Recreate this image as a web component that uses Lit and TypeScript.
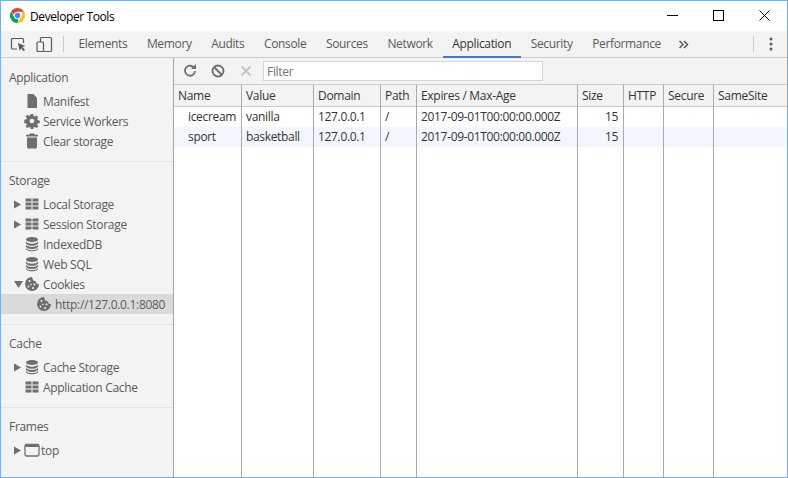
import { LitElement, html, css, svg } from 'lit';
import { customElement } from 'lit/decorators.js';

const cookie = svg`<path d="M8 1a7 7 0 1 0 7 7 2.800 2.800 0 0 1-3-2.800A3 3 0 0 1 8.600 2.500 1.800 1.800 0 0 1 8 1z"/><g fill="#f3f3f3"><circle cx="5.500" cy="5" r="1"/><circle cx="10.500" cy="8.500" r="1"/><circle cx="7" cy="8.500" r=".8"/><circle cx="4.500" cy="10.500" r=".9"/><circle cx="9" cy="12" r="1"/></g>`;

const icons: Record<string, unknown> = {
  manifest: svg`<path d="M3.500 1h6l3.500 4v10H3.500z"/>`,
  gear: svg`<path d="M6.800 1h2.400l.4 2 1.300.6 1.700-1.100 1.700 1.700-1.100 1.700.6 1.300 2 .4v2.400l-2 .4-.6 1.300 1.100 1.700-1.700 1.700-1.700-1.100-1.300.6-.4 2H6.800l-.4-2-1.300-.6-1.700 1.100-1.700-1.700 1.100-1.700-.6-1.300-2-.4V6.800l2-.4.6-1.300-1.100-1.700 1.700-1.700 1.700 1.100 1.300-.6z"/><circle cx="8" cy="8" r="2.300" fill="#f3f3f3"/>`,
  trash: svg`<path d="M6 .5h4l1 1.200h3v1.800H2V1.700h3zM3 4.500h10V14.500l-1 1H4l-1-1z"/>`,
  grid: svg`<path d="M1.500 2.500h6v3h-6zM8.500 2.500h6v3h-6zM1.500 6.500h6v3h-6zM8.500 6.500h6v3h-6zM1.500 10.500h6v3h-6zM8.500 10.500h6v3h-6z"/>`,
  db: svg`<ellipse cx="8" cy="3.500" rx="6" ry="2.500"/><path d="M2 5.500c1 1.700 3.500 2.200 6 2.200s5-.5 6-2.200v2c-1 1.700-3.500 2.300-6 2.300s-5-.6-6-2.300zM2 8.800c1 1.700 3.500 2.200 6 2.200s5-.5 6-2.200v2c-1 1.700-3.500 2.300-6 2.300s-5-.6-6-2.300zM2 12c1 1.700 3.500 2.200 6 2.200s5-.5 6-2.200v1.300c-1 1.500-3.500 2-6 2s-5-.5-6-2z"/>`,
  cookie,
  frame: svg`<rect x="1" y="2.500" width="14" height="11.500" rx="1.500" fill="none" stroke="currentColor" stroke-width="1.300"/><rect x="1" y="2.500" width="14" height="2.500"/>`,
};

interface Item { label: string; icon: string; arrow?: 'right' | 'down'; selected?: boolean; child?: boolean }
interface Section { title: string; items: Item[] }

const sections: Section[] = [
  { title: 'Application', items: [
    { label: 'Manifest', icon: 'manifest' },
    { label: 'Service Workers', icon: 'gear' },
    { label: 'Clear storage', icon: 'trash' },
  ] },
  { title: 'Storage', items: [
    { label: 'Local Storage', icon: 'grid', arrow: 'right' },
    { label: 'Session Storage', icon: 'grid', arrow: 'right' },
    { label: 'IndexedDB', icon: 'db' },
    { label: 'Web SQL', icon: 'db' },
    { label: 'Cookies', icon: 'cookie', arrow: 'down' },
    { label: 'http://127.0.0.1:8080', icon: 'cookie', selected: true, child: true },
  ] },
  { title: 'Cache', items: [
    { label: 'Cache Storage', icon: 'db', arrow: 'right' },
    { label: 'Application Cache', icon: 'grid' },
  ] },
  { title: 'Frames', items: [{ label: 'top', icon: 'frame', arrow: 'right' }] },
];

const tabs = ['Elements', 'Memory', 'Audits', 'Console', 'Sources', 'Network', 'Application', 'Security', 'Performance'];

const columns = [
  { title: 'Name', width: 68, cells: ['icecream', 'sport'], cls: 'indent' },
  { title: 'Value', width: 72, cells: ['vanilla', 'basketball'] },
  { title: 'Domain', width: 67, cells: ['127.0.0.1', '127.0.0.1'] },
  { title: 'Path', width: 36, cells: ['/', '/'] },
  { title: 'Expires / Max-Age', width: 161, cells: ['2017-09-01T00:00:00.000Z', '2017-09-01T00:00:00.000Z'] },
  { title: 'Size', width: 46, cells: ['15', '15'], cls: 'num' },
  { title: 'HTTP', width: 40, cells: ['', ''] },
  { title: 'Secure', width: 50, cells: ['', ''] },
  { title: 'SameSite', width: 73, cells: ['', ''] },
];

@customElement('app-root')
export class AppRoot extends LitElement {
  static styles = css`
    :host {
      display: block;
      width: 788px;
      height: 478px;
      font-family: 'Open Sans', 'Noto Sans', sans-serif;
      font-size: 12px;
      color: #333;
    }
    .window {
      box-sizing: border-box;
      width: 788px;
      height: 478px;
      border: 1px solid #6db3f2;
      display: flex;
      flex-direction: column;
      background: #fff;
      overflow: hidden;
    }
    .titlebar {
      height: 30px;
      flex: none;
      display: flex;
      align-items: center;
      padding-left: 9px;
      color: #000;
    }
    .logo { margin-top: -1px; }
    .titlebar .title { margin-left: 5px; letter-spacing: -0.4px; }
    .winbtns { margin-left: auto; display: flex; align-self: flex-start; }
    .winbtn { width: 46px; height: 28px; display: flex; align-items: center; justify-content: center; }
    .toolbar {
      height: 27px;
      box-sizing: border-box;
      flex: none;
      background: #f3f3f3;
      border-bottom: 1px solid #ccc;
      display: flex;
      align-items: center;
      padding-left: 9px;
      color: #5a5a5a;
    }
    .toolbar svg { flex: none; }
    .tool { width: 17px; height: 17px; margin-right: 9px; }
    .sep { width: 1px; height: 16px; background: #ccc; flex: none; margin-left: 1px; }
    .tabs { display: flex; height: 27px; margin-left: 4.7px; align-self: flex-start; }
    .tab {
      padding: 0 9.8px;
      line-height: 26px;
      box-sizing: border-box;
      letter-spacing: -0.35px;
      white-space: nowrap;
    }
    .tab.active { border-bottom: 2px solid #3879d9; color: #333; }
    .more { margin-left: 8px; }
    .main { flex: 1; display: flex; min-height: 0; }
    .sidebar {
      width: 172px;
      flex: none;
      background: #f3f3f3;
      border-right: 1px solid #a3a3a3;
      color: #5a5a5a;
    }
    .section { border-bottom: 1px solid #e4e4e4; padding: 9px 0 10px; }
    .section:first-child { padding-top: 10px; }
    .section:last-child { border-bottom: none; }
    .section h3 {
      margin: 0 0 3px;
      font: inherit;
      height: 20px;
      line-height: 20px;
      padding-left: 8px;
      letter-spacing: -0.3px;
    }
    .row { display: flex; align-items: center; height: 20px; white-space: nowrap; letter-spacing: -0.3px; }
    .row.selected { background: #dadada; }
    .arrow { width: 12px; margin-left: 13px; flex: none; display: flex; }
    .row.child .arrow { margin-left: 25px; }
    .row .ic { width: 16px; height: 16px; fill: #6e6e6e; color: #6e6e6e; flex: none; margin: 0 3px 0 -2px; }
    .row.frame .ic { margin-right: 1px; }
    .content { flex: 1; display: flex; flex-direction: column; min-width: 0; }
    .subbar {
      height: 27px;
      box-sizing: border-box;
      flex: none;
      background: #f3f3f3;
      border-bottom: 1px solid #ccc;
      display: flex;
      align-items: center;
      padding-left: 9px;
    }
    .subbar .btn { width: 14px; height: 14px; margin-right: 14px; flex: none; }
    .filter {
      box-sizing: border-box;
      width: 280px;
      height: 20px;
      margin-left: -4px;
      background: #fff;
      border: 1px solid #d6d6d6;
      padding-left: 3px;
      line-height: 19px;
      color: #757575;
      letter-spacing: -0.3px;
    }
    .table { flex: 1; display: flex; min-height: 0; }
    .col { box-sizing: border-box; border-right: 1px solid #aaa; flex: none; }
    .col:last-child { border-right: none; }
    .head {
      height: 22px;
      box-sizing: border-box;
      background: #f3f3f3;
      border-bottom: 1px solid #ccc;
      padding-left: 4px;
      line-height: 21px;
      white-space: nowrap;
      letter-spacing: -0.3px;
    }
    .cell { height: 20px; line-height: 20px; padding: 0 4px; white-space: nowrap; letter-spacing: -0.33px; }
    .cell.even { background: #f2f7fd; }
    .indent .cell { padding-left: 14px; }
    .num .cell { text-align: right; padding-right: 5px; }
  `;

  private section(s: Section) {
    return html`<div class="section">
      <h3>${s.title}</h3>
      ${s.items.map((it) => html`
        <div class="row ${it.selected ? 'selected' : ''} ${it.child ? 'child' : ''} ${it.icon === 'frame' ? 'frame' : ''}">
          <span class="arrow">
            ${it.arrow === 'right' ? html`<svg width="7" height="9"><path d="M0 .5l7 4-7 4z" fill="#6e6e6e"/></svg>` : ''}
            ${it.arrow === 'down' ? html`<svg width="9" height="7"><path d="M0 0h9L4.500 7z" fill="#6e6e6e"/></svg>` : ''}
          </span>
          <svg class="ic" viewBox="0 0 16 16">${icons[it.icon]}</svg>
          <span>${it.label}</span>
        </div>`)}
    </div>`;
  }

  render() {
    return html`<div class="window">
      <div class="titlebar">
        <svg class="logo" width="15" height="15" viewBox="0 0 16 16">
          <path d="M8 0a8 8 0 0 1 6.930 4H8a4 4 0 0 0-3.900 3.100L1.400 3.500A8 8 0 0 1 8 0z" fill="#db4437"/>
          <path d="M14.930 4A8 8 0 0 1 8 16l3.460-6a4 4 0 0 0 0-6z" fill="#fbc02d"/>
          <path d="M8 16A8 8 0 0 1 1.400 3.500L4.540 10a4 4 0 0 0 4.500 1.900z" fill="#0f9d58"/>
          <circle cx="8" cy="8" r="3.400" fill="#4285f4" stroke="#fff" stroke-width=".8"/>
        </svg>
        <span class="title">Developer Tools</span>
        <div class="winbtns">
          <div class="winbtn"><svg width="11" height="11"><path d="M0 5.500h11" stroke="#000"/></svg></div>
          <div class="winbtn"><svg width="11" height="11"><rect x=".5" y=".5" width="10" height="10" fill="none" stroke="#000"/></svg></div>
          <div class="winbtn"><svg width="11" height="11"><path d="M.5.500l10 10M10.500.500l-10 10" stroke="#000"/></svg></div>
        </div>
      </div>
      <div class="toolbar">
        <svg class="tool" viewBox="0 0 17 17" fill="none" stroke="#5a5a5a" stroke-width="1.200">
          <path d="M7 13H2.500a1 1 0 0 1-1-1V3.500a1 1 0 0 1 1-1h10a1 1 0 0 1 1 1V7"/>
          <path d="M8 7l7.500 3-3 1 2.500 3-1.500 1.300-2.300-3-1.700 2.500z" fill="#5a5a5a" stroke="none"/>
        </svg>
        <svg class="tool" viewBox="0 0 17 17" fill="none" stroke="#5a5a5a" stroke-width="1.200">
          <path d="M4.500 6V2.500a1 1 0 0 1 1-1h9a1 1 0 0 1 1 1v12a1 1 0 0 1-1 1H8"/>
          <rect x="1" y="6" width="6.500" height="9.500" rx="1"/>
        </svg>
        <span class="sep"></span>
        <div class="tabs">
          ${tabs.map((t) => html`<div class="tab ${t === 'Application' ? 'active' : ''}">${t}</div>`)}
        </div>
        <svg class="more" width="10" height="9" viewBox="0 0 10 9" fill="none" stroke="#5a5a5a" stroke-width="1.500">
          <path d="M.5 1l3.500 3.500L.5 8M5 1l3.500 3.500L5 8"/>
        </svg>
        <span class="sep" style="margin-left:auto"></span>
        <svg style="margin:0 14px 0 15px" width="4" height="14" fill="#5a5a5a">
          <circle cx="2" cy="2" r="1.500"/><circle cx="2" cy="7" r="1.500"/><circle cx="2" cy="12" r="1.500"/>
        </svg>
      </div>
      <div class="main">
        <div class="sidebar">${sections.map((s) => this.section(s))}</div>
        <div class="content">
          <div class="subbar">
            <svg class="btn" viewBox="0 0 14 14" fill="none" stroke="#6e6e6e" stroke-width="1.800">
              <path d="M11.500 4.500A5 5 0 1 0 12 7"/><path d="M8 5h5V0z" fill="#6e6e6e" stroke="none"/>
            </svg>
            <svg class="btn" viewBox="0 0 14 14" fill="none" stroke="#6e6e6e" stroke-width="1.800">
              <circle cx="7" cy="7" r="5.500"/><path d="M3 3l8 8"/>
            </svg>
            <svg class="btn" viewBox="0 0 14 14" fill="none" stroke="#c4c4c4" stroke-width="1.800">
              <path d="M2.500 2.500l9 9M11.500 2.500l-9 9"/>
            </svg>
            <div class="filter">Filter</div>
          </div>
          <div class="table">
            ${columns.map((c) => html`
              <div class="col ${c.cls ?? ''}" style="width:${c.width}px">
                <div class="head">${c.title}</div>
                ${c.cells.map((v, i) => html`<div class="cell ${i % 2 ? 'even' : ''}">${v}</div>`)}
              </div>`)}
          </div>
        </div>
      </div>
    </div>`;
  }
}
